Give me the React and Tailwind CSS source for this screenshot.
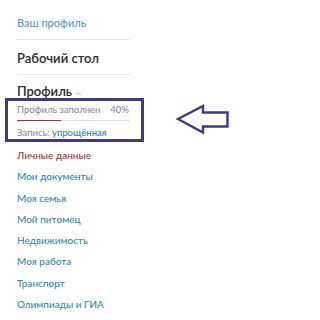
import React from "react";

const items = [
  { t: "Личные данные", c: "text-[#a3343c]" },
  { t: "Мои документы", c: "text-[#3a86a6]" },
  { t: "Моя семья", c: "text-[#3a86a6]" },
  { t: "Мой питомец", c: "text-[#3a86a6]" },
  { t: "Недвижимость", c: "text-[#3a86a6]" },
  { t: "Моя работа", c: "text-[#3a86a6]" },
  { t: "Транспорт", c: "text-[#3a86a6]" },
  { t: "Олимпиады и ГИА", c: "text-[#3a86a6]" },
];

function Arrow() {
  return (
    <svg width="56" height="32" viewBox="172 106 56 32">
      <path
        d="M175 121 L200 108 L200 114.5 L224.5 114.5 L224.5 128.5 L200 128.5 L200 134.5 Z"
        fill="none"
        stroke="#3b3a8f"
        strokeWidth="2.4"
        strokeLinejoin="miter"
      />
    </svg>
  );
}

export default function App() {
  return (
    <div
      className="w-[246px] h-[320px] bg-white overflow-hidden flex flex-col pt-[14px]"
      style={{ fontFamily: 'Lato, "Open Sans", "Liberation Sans", sans-serif' }}
    >
      <div className="ml-[17px] w-[113px] flex flex-col">
        <div className="h-[26px] pb-[8px] border-b border-[#e6e6e6] leading-[18px] text-[11px] font-medium text-[#5b9bb8]">
          Ваш профиль
        </div>
        <div className="pt-[9px] pb-[7px] border-b border-[#e6e6e6] leading-[18px] text-[13px] font-semibold text-[#2a2a2a]">
          Рабочий стол
        </div>
        <div className="pt-[10px] h-[23px] flex items-end gap-[3px] leading-[13px] text-[13px] font-semibold text-[#2a2a2a]">
          <span>Профиль</span>
          <svg width="7" height="5" viewBox="0 0 7 5" className="mb-[2px]">
            <path d="M1 4 L3.5 1.5 L6 4" fill="none" stroke="#c8c8c8" strokeWidth="1" />
          </svg>
        </div>
      </div>

      <div className="flex items-center gap-[31px]">
        <div className="ml-[5px] w-[139px] h-[44px] border-[3px] border-[#3b3a8f] pl-[9px] pr-[11px] pt-[3px] flex flex-col text-[9.5px] font-medium text-[#8e8e8e]">
          <div className="flex justify-between h-[12px] leading-[12px]">
            <span>Профиль заполнен</span>
            <span className="pr-[1px]">40%</span>
          </div>
          <div className="mt-[3.5px] h-[2px] bg-[#e2e2e2] flex">
            <div className="w-[44px] h-full bg-[#a3343c]" />
          </div>
          <div className="mt-[6.5px] h-[12px] leading-[12px]">
            Запись: <span className="font-semibold text-[#3a8cae]">упрощённая</span>
          </div>
        </div>
        <Arrow />
      </div>

      <div className="pt-[3px] flex flex-col">
        {items.map((it) => (
          <div key={it.t} className={`pl-[17px] h-[21.3px] leading-[21.3px] text-[10px] font-medium ${it.c}`}>
            {it.t}
          </div>
        ))}
      </div>
    </div>
  );
}
